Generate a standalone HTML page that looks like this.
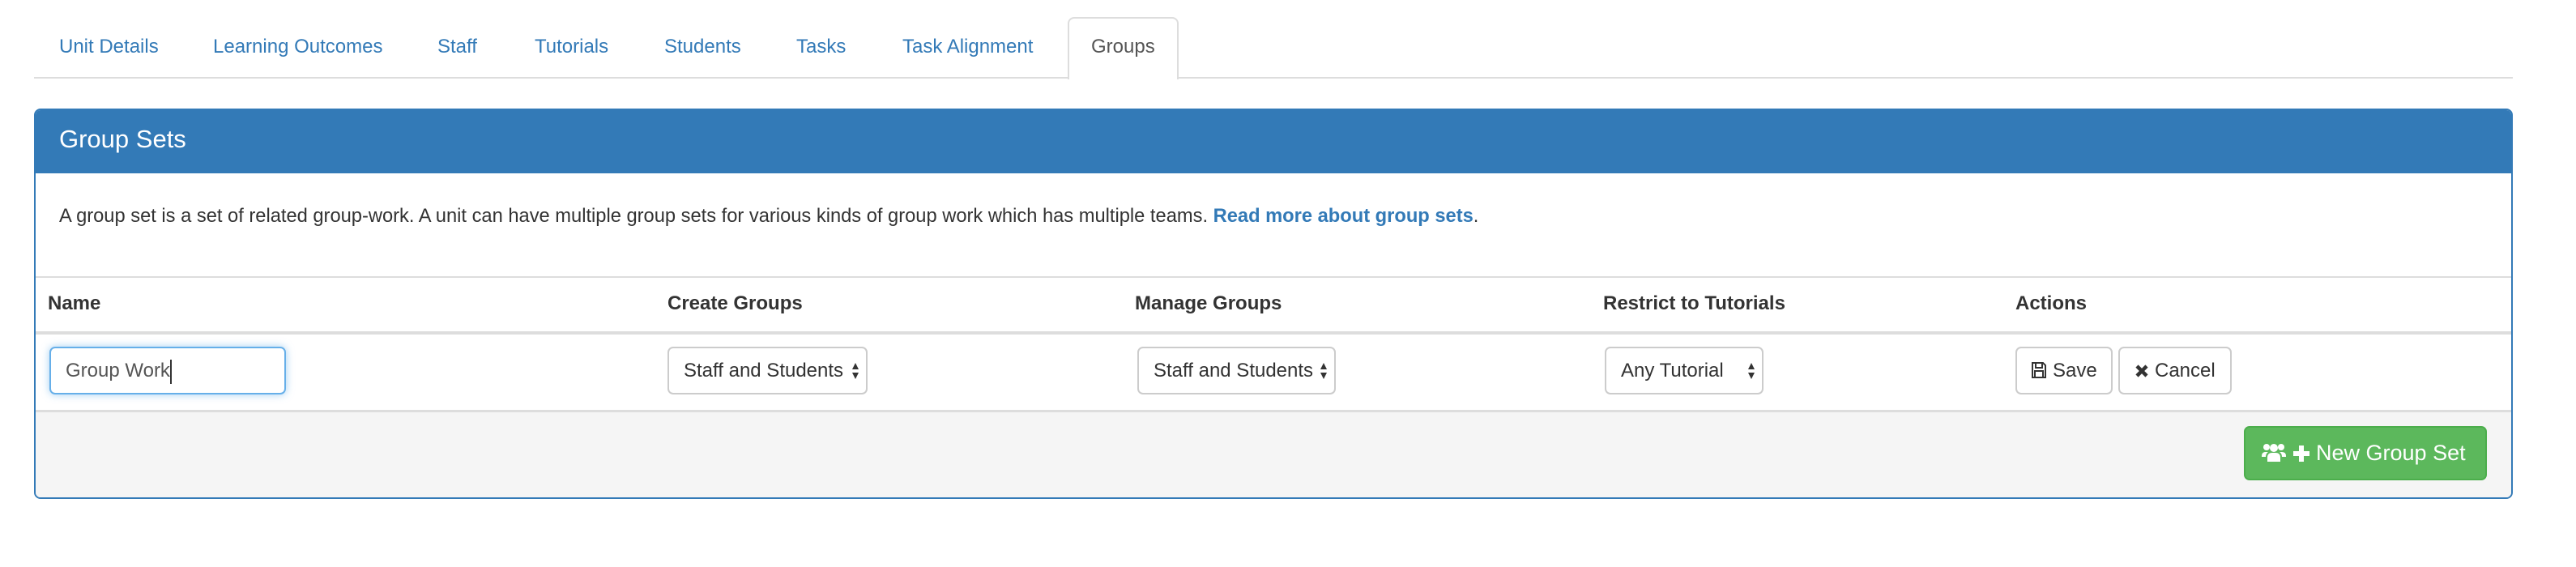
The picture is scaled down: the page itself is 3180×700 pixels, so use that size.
<!DOCTYPE html>
<html><head><meta charset="utf-8"><style>
*{box-sizing:border-box;margin:0;padding:0}
body{width:3180px;height:700px;background:#fff;font-family:"Liberation Sans",sans-serif;color:#333;position:relative;overflow:hidden}
.a{position:absolute;white-space:nowrap}
.tab{position:absolute;top:40px;font-size:24px;color:#337ab7;line-height:36px}
.sel{position:absolute;top:428px;height:59px;border:2px solid #ccc;border-radius:7px;background:#fff;font-size:24px;line-height:55px;padding-left:18px;color:#333}
.arr{position:absolute;right:8px;top:16px;width:10px;height:24px}
.btn{position:absolute;top:428px;height:59px;border:2px solid #ccc;border-radius:7px;background:#fff;font-size:24px;line-height:55px;text-align:center;color:#333}
.h{font-size:24px;font-weight:bold;line-height:30px;top:360px}
</style></head><body>
<div class="a" style="left:42px;top:95px;width:3060px;height:2px;background:#ddd"></div>
<div class="a" style="left:1318px;top:21px;width:137px;height:77px;border:2px solid #ddd;border-bottom:none;border-radius:8px 8px 0 0;background:#fff"></div>
<div class="tab" style="left:73px">Unit Details</div>
<div class="tab" style="left:263px">Learning Outcomes</div>
<div class="tab" style="left:540px">Staff</div>
<div class="tab" style="left:660px">Tutorials</div>
<div class="tab" style="left:820px">Students</div>
<div class="tab" style="left:983px">Tasks</div>
<div class="tab" style="left:1114px">Task Alignment</div>
<div class="tab" style="left:1347px;color:#555">Groups</div>

<div class="a" style="left:42px;top:134px;width:3060px;height:482px;border:2px solid #337ab7;border-radius:8px;overflow:hidden;background:#fff">
  <div style="position:absolute;left:0;top:0;right:0;height:78px;background:#337ab7"></div>
  <div style="position:absolute;left:0;top:370px;right:0;bottom:0;background:#f5f5f5;border-top:3px solid #ddd"></div>
  <div style="position:absolute;left:0;top:205px;right:0;height:2px;background:#ddd"></div>
  <div style="position:absolute;left:0;top:273px;right:0;height:4px;background:#ddd"></div>
</div>
<div class="a" style="left:73px;top:152px;font-size:31px;color:#fff;line-height:40px">Group Sets</div>
<div class="a" style="left:73px;top:252px;font-size:23.7px;line-height:30px;color:#333">A group set is a set of related group-work. A unit can have multiple group sets for various kinds of group work which has multiple teams. <b style="color:#337ab7">Read more about group sets</b>.</div>

<div class="a h" style="left:59px">Name</div>
<div class="a h" style="left:824px">Create Groups</div>
<div class="a h" style="left:1401px">Manage Groups</div>
<div class="a h" style="left:1979px">Restrict to Tutorials</div>
<div class="a h" style="left:2488px">Actions</div>

<div class="a" style="left:61px;top:428px;width:292px;height:59px;border:2px solid #66afe9;border-radius:7px;box-shadow:0 0 10px rgba(102,175,233,.6);font-size:24px;line-height:55px;padding-left:18px;color:#555">Group Work<span style="display:inline-block;width:2px;height:30px;background:#333;vertical-align:middle"></span></div>

<div class="sel" style="left:824px;width:247px">Staff and Students<svg class="arr" viewBox="0 0 10 24"><path d="M5 2L9 10H1Z M5 22L9 14H1Z" fill="#333"/></svg></div>
<div class="sel" style="left:1404px;width:245px">Staff and Students<svg class="arr" viewBox="0 0 10 24"><path d="M5 2L9 10H1Z M5 22L9 14H1Z" fill="#333"/></svg></div>
<div class="sel" style="left:1981px;width:196px">Any Tutorial<svg class="arr" viewBox="0 0 10 24"><path d="M5 2L9 10H1Z M5 22L9 14H1Z" fill="#333"/></svg></div>

<div class="btn" style="left:2488px;width:120px"><svg width="20" height="22" viewBox="0 0 20 22" style="vertical-align:-3px"><path d="M2 2H15L18 5V20H2Z M6 2V8H14V2 M5 12H15V20H5Z" fill="none" stroke="#333" stroke-width="2"/></svg> Save</div>
<div class="btn" style="left:2615px;width:140px"><svg width="18" height="18" viewBox="0 0 18 18" style="vertical-align:-2px"><path d="M3 3L15 15M15 3L3 15" stroke="#333" stroke-width="4.5"/></svg> Cancel</div>

<div class="a" style="left:2770px;top:526px;width:300px;height:67px;background:#5cb85c;border:2px solid #4cae4c;border-radius:7px;color:#fff;font-size:27px;line-height:63px;padding-left:20px">
<svg width="30" height="26" viewBox="0 0 30 26" style="vertical-align:-4px"><g fill="#fff"><circle cx="6" cy="6" r="4"/><circle cx="24" cy="6" r="4"/><circle cx="15" cy="7" r="5"/><path d="M0 17Q0 12 5 12H8Q5 14 5 18H0Z M30 17Q30 12 25 12H22Q25 14 25 18H30Z M7 24V19Q7 13 13 13H17Q23 13 23 19V24Z"/></g></svg>
<svg width="22" height="22" viewBox="0 0 22 22" style="vertical-align:-3px"><path d="M11 1V21M1 11H21" stroke="#fff" stroke-width="6"/></svg> New Group Set</div>
</body></html>
